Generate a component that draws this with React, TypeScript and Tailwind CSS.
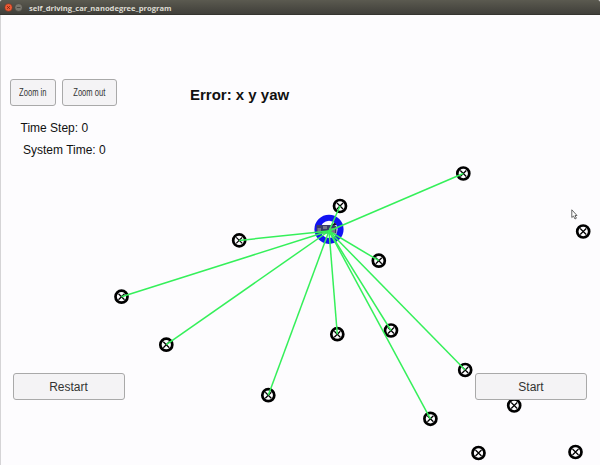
const landmarks = [
  { x: 463.3, y: 173.5, seen: true },
  { x: 340, y: 206, seen: true },
  { x: 239.2, y: 240.4, seen: true },
  { x: 378.8, y: 260.7, seen: true },
  { x: 121.5, y: 296.7, seen: true },
  { x: 166.3, y: 344.7, seen: true },
  { x: 337.3, y: 334.2, seen: true },
  { x: 391, y: 330.5, seen: true },
  { x: 268.3, y: 395.2, seen: true },
  { x: 465.2, y: 370, seen: true },
  { x: 430.4, y: 418.8, seen: true },
  { x: 583.2, y: 231.5, seen: false },
  { x: 514.2, y: 405.5, seen: false },
  { x: 478.5, y: 453, seen: false },
  { x: 575.5, y: 452, seen: false },
];

const car = { x: 329, y: 230 };

function Landmark({ x, y }: { x: number; y: number }) {
  return (
    <g transform={`translate(${x} ${y})`}>
      <circle r="6" fill="#fdfcfe" stroke="#000" strokeWidth="2.7" />
      <path d="M-3 -3L3 3M3 -3L-3 3" stroke="#000" strokeWidth="1.25" />
    </g>
  );
}

function WorldMap() {
  return (
    <svg className="absolute inset-0" width="600" height="465" viewBox="0 0 600 465">
      {landmarks.map((l) => (
        <Landmark key={`${l.x}-${l.y}`} x={l.x} y={l.y} />
      ))}
      <circle cx={car.x} cy={car.y - 0.7} r="11.6" fill="#fdfcfe" stroke="#1212f2" strokeWidth="6" />
      <path d="M316.5 225h18l2 1.5v7h-20z" fill="#393b68" />
      <path d="M331.5 225l3.5-2.5 1.5 2.5z" fill="#15151c" />
      <path d="M317.5 228h3.5v4.5h-3.5zM323 226h4v3h-4zM329 228h6v5h-6z" fill="#777784" />
      {landmarks
        .filter((l) => l.seen)
        .map((l) => (
          <line key={`${l.x}-${l.y}`} x1={car.x} y1={car.y + 1} x2={l.x} y2={l.y} stroke="#35f05a" strokeWidth="1.5" />
        ))}
    </svg>
  );
}

function Button({ label, className, textClass }: { label: string; className: string; textClass: string }) {
  return (
    <button className={`flex items-center justify-center rounded-[3px] border border-[#a9a9a9] bg-[#f4f3f5] text-[#333] ${className}`}>
      <span className={`whitespace-nowrap ${textClass}`}>{label}</span>
    </button>
  );
}

export default function App() {
  return (
    <div className="relative flex h-[465px] w-[600px] flex-col overflow-hidden bg-[#fdfcfe] font-['Liberation_Sans',Arial,sans-serif] text-[#111]">
      <WorldMap />
      <header className="relative flex h-[15px] shrink-0 items-center rounded-t-[2px] border-b border-[#35342f] bg-linear-to-b from-[#5b5a50] to-[#403f3a] pl-1">
        <svg className="mt-px" width="19" height="9" viewBox="0 0 19 9">
          <circle cx="4.5" cy="4.5" r="3.9" fill="#ef5933" stroke="#38302b" strokeWidth=".5" />
          <path d="M3.2 3.2L5.8 5.8M5.8 3.2L3.2 5.8" stroke="#702713" strokeWidth=".9" />
          <circle cx="14.6" cy="4.5" r="3.9" fill="#79776e" stroke="#383731" strokeWidth=".5" />
          <path d="M12.8 4.5h3.6" stroke="#45443f" strokeWidth=".9" />
        </svg>
        <span className="mt-[3px] ml-1.5 whitespace-nowrap font-['Open_Sans','Noto_Sans',sans-serif] text-[7.6px] leading-none font-bold text-[#dddbd2]">
          self_driving_car_nanodegree_program
        </span>
      </header>
      <main className="relative flex grow flex-col justify-between border-l border-[#d5d4d6] pt-16 pr-[13px] pb-[65px] pl-[9px]">
        <section>
          <div className="flex items-center">
            <Button label="Zoom in" className="h-[27px] w-[46px]" textClass="text-[11.5px] scale-x-[.66]" />
            <Button label="Zoom out" className="ml-[6px] h-[27px] w-[55px]" textClass="text-[11.5px] scale-x-[.66]" />
            <h1 className="mt-[5px] ml-[73px] text-[15px] leading-[18px] font-bold whitespace-nowrap">Error: x y yaw</h1>
          </div>
          <p className="mt-3.5 ml-[10.5px] text-[12px] leading-4">Time Step: 0</p>
          <p className="mt-1.5 ml-[13px] text-[12px] leading-4">System Time: 0</p>
        </section>
        <footer className="flex justify-between pl-[2.5px]">
          <Button label="Restart" className="h-[27px] w-[112px]" textClass="text-[12px]" />
          <Button label="Start" className="h-[27px] w-[112px]" textClass="text-[12px]" />
        </footer>
      </main>
      <svg className="absolute top-[209px] left-[571px]" width="7" height="11" viewBox="0 0 7 11">
        <path d="M.8 .8V8.5L2.5 7L4 10L5.4 9.2L4 6.5H6z" fill="#fff" stroke="#555" strokeWidth=".9" />
      </svg>
    </div>
  );
}
